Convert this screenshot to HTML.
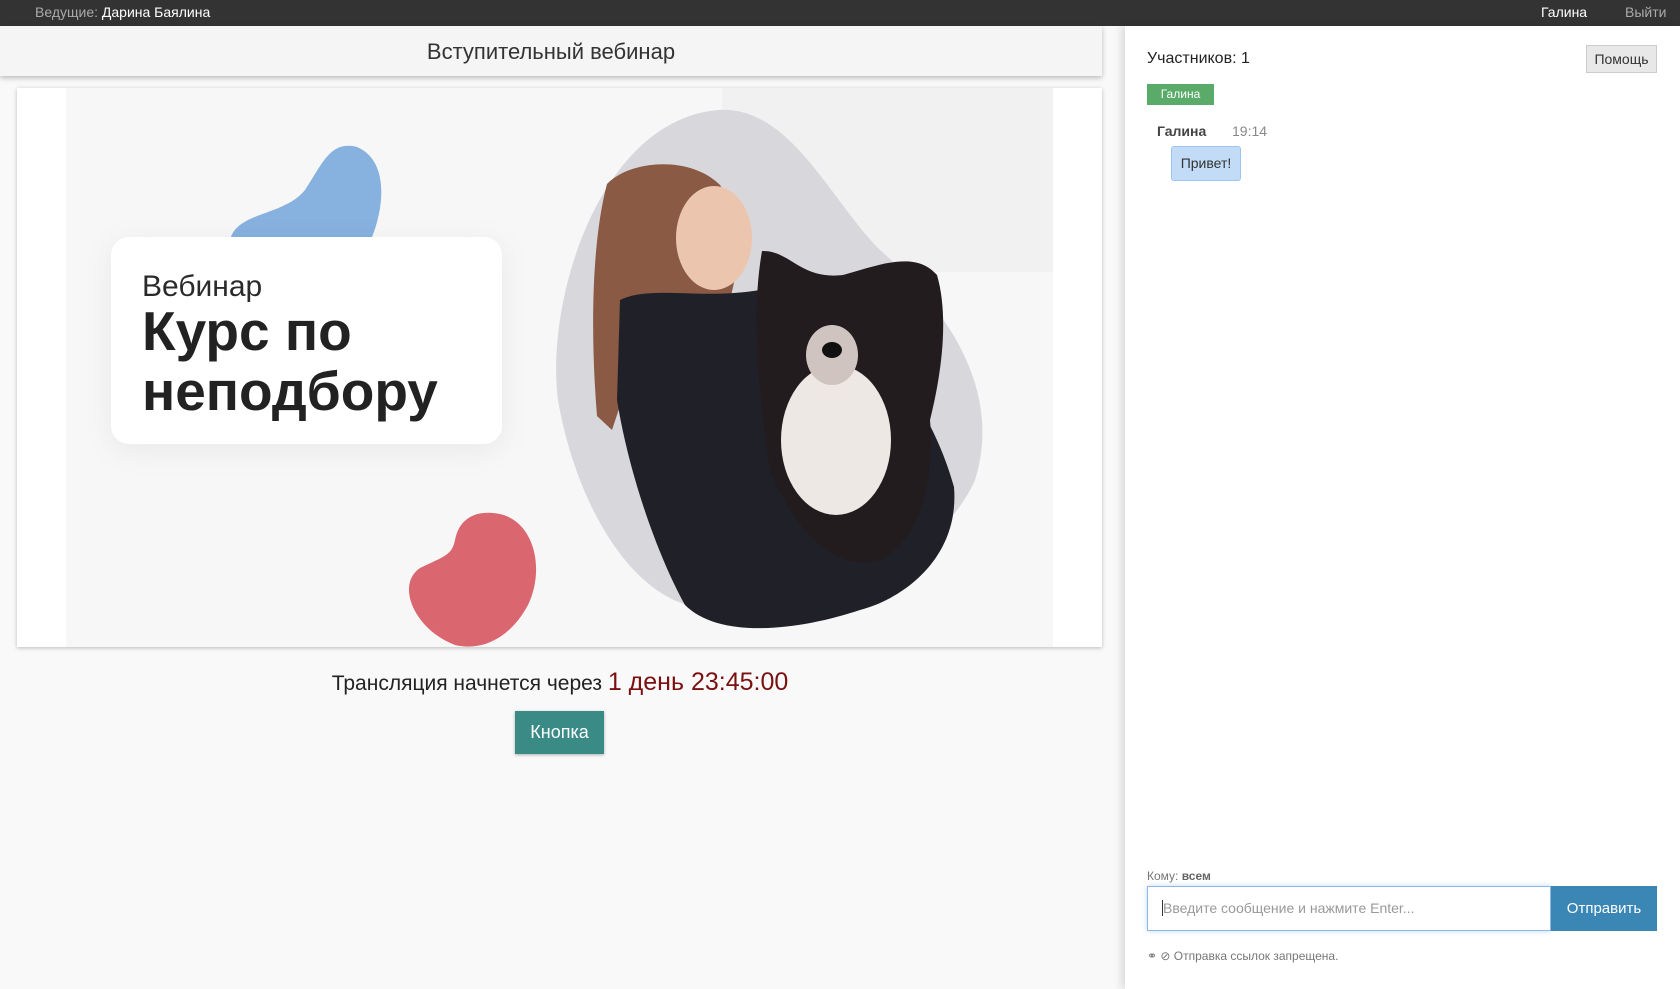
<!DOCTYPE html>
<html><head><meta charset="utf-8"><style>
*{margin:0;padding:0;box-sizing:border-box}
body{width:1680px;height:989px;overflow:hidden;background:#f9f9f9;font-family:"Liberation Sans",Arial,sans-serif;position:relative}
.top{position:absolute;left:0;top:0;width:1680px;height:26px;background:#333;color:#aaa;font-size:14px;line-height:24px}
.top b{color:#fff;font-weight:normal}
.abs{position:absolute}
.side{position:absolute;left:1125px;top:26px;width:555px;height:963px;background:#fff;box-shadow:-4px 0 8px rgba(0,0,0,.12)}
</style></head><body>
<div class="top"><span class="abs" style="left:35px">Ведущие: <b>Дарина Баялина</b></span>
<span class="abs" style="left:1541px;color:#fff">Галина</span><span class="abs" style="left:1625px">Выйти</span></div>

<div class="abs" style="left:0;top:26px;width:1102px;height:50px;background:#f5f5f5;box-shadow:0 2px 5px rgba(0,0,0,.25);text-align:center;font-size:22px;line-height:52px;color:#333">Вступительный вебинар</div>

<div class="abs" style="left:17px;top:88px;width:1085px;height:559px;background:#fff;box-shadow:0 1px 4px rgba(0,0,0,.25);overflow:hidden">
<svg width="1085" height="559" viewBox="17 88 1085 559" xmlns="http://www.w3.org/2000/svg" style="position:absolute;left:0;top:0">
<rect x="66" y="88" width="987" height="559" fill="#f7f7f7"/>
<rect x="722" y="88" width="331" height="184" fill="#f2f1f2"/>
<path d="M231 237 C240 212 285 215 305 190 C322 165 330 140 357 147 C388 160 385 205 372 237 Z" fill="#87b1df"/>
<path d="M455 540 C460 515 480 510 500 514 C535 522 545 570 528 605 C512 635 485 652 455 645 C415 630 395 585 420 568 C445 556 452 555 455 540 Z" fill="#da6670"/>
<path d="M718 110 C790 105 830 200 880 250 C960 320 1000 400 975 480 C940 560 820 615 702 608 C630 600 575 500 558 400 C545 300 600 120 718 110 Z" fill="#d8d7dc"/>
<path d="M607 184 C630 160 690 155 720 185 C745 220 740 260 730 300 L700 340 L640 345 L612 430 L597 416 C590 330 592 240 607 184 Z" fill="#8a5a45"/>
<ellipse cx="714" cy="238" rx="38" ry="52" fill="#ecc5ae"/>
<path d="M620 300 C650 285 700 300 760 290 C860 300 930 400 954 487 C960 560 900 600 860 610 C800 630 720 640 685 605 C660 560 630 480 617 400 Z" fill="#202028"/>
<path d="M762 251 C790 250 800 280 843 275 C880 265 915 250 937 275 C950 320 940 380 930 420 C935 480 920 540 880 560 C830 575 790 520 770 470 C760 400 750 320 762 251 Z" fill="#231c1e"/>
<ellipse cx="836" cy="440" rx="55" ry="75" fill="#eee8e5"/>
<ellipse cx="832" cy="355" rx="26" ry="30" fill="#cfc4bf"/>
<ellipse cx="832" cy="350" rx="10" ry="8" fill="#111"/>
<rect x="111" y="237" width="391" height="207" rx="18" fill="#fff" style="filter:drop-shadow(0 6px 14px rgba(0,0,0,.06))"/>
<text x="142" y="296" font-family="Liberation Sans,sans-serif" font-size="30" fill="#2a2a2a">Вебинар</text>
<text x="142" y="350" font-family="Liberation Sans,sans-serif" font-size="55" font-weight="bold" fill="#222">Курс по</text>
<text x="142" y="410" font-family="Liberation Sans,sans-serif" font-size="55" font-weight="bold" fill="#222">неподбору</text>
</svg></div>

<div class="abs" style="left:0;width:1120px;top:668px;text-align:center;font-size:21px;color:#222">Трансляция начнется через <span style="color:#7a1010;font-size:25px">1 день 23:45:00</span></div>
<div class="abs" style="left:515px;top:711px;width:89px;height:43px;background:#3a8a86;color:#fff;font-size:18px;line-height:43px;text-align:center;box-shadow:0 1px 3px rgba(0,0,0,.3)">Кнопка</div>

<div class="side"></div>
<div class="abs" style="left:1147px;top:50px;font-size:16px;color:#222">Участников: 1</div>
<div class="abs" style="left:1586px;top:45px;width:71px;height:28px;background:#e8e8e8;border:1px solid #ccc;font-size:14px;line-height:26px;text-align:center;color:#333">Помощь</div>
<div class="abs" style="left:1147px;top:84px;width:67px;height:21px;background:#5aab6a;color:#fff;font-size:12px;line-height:21px;text-align:center">Галина</div>
<div class="abs" style="left:1157px;top:123px;font-size:14px;font-weight:bold;color:#444">Галина</div>
<div class="abs" style="left:1232px;top:123px;font-size:14px;color:#888">19:14</div>
<div class="abs" style="left:1171px;top:146px;width:70px;height:35px;background:#c2dcf7;border:1px solid #9cc6ee;border-radius:3px;font-size:14px;line-height:33px;text-align:center;color:#333">Привет!</div>
<div class="abs" style="left:1147px;top:869px;font-size:12px;color:#777">Кому: <b style="color:#666">всем</b></div>
<div class="abs" style="left:1147px;top:886px;width:404px;height:45px;border:1px solid #8fb8e6;box-shadow:0 0 5px rgba(100,160,230,.4);font-size:14px;line-height:43px;padding-left:14px;color:#999"><span style="border-left:1px solid #333">В</span>ведите сообщение и нажмите Enter...</div>
<div class="abs" style="left:1551px;top:886px;width:106px;height:45px;background:#3a87b6;color:#fff;font-size:15px;line-height:45px;text-align:center">Отправить</div>
<div class="abs" style="left:1147px;top:949px;font-size:12px;color:#777">⚭ ⊘ Отправка ссылок запрещена.</div>
</body></html>
